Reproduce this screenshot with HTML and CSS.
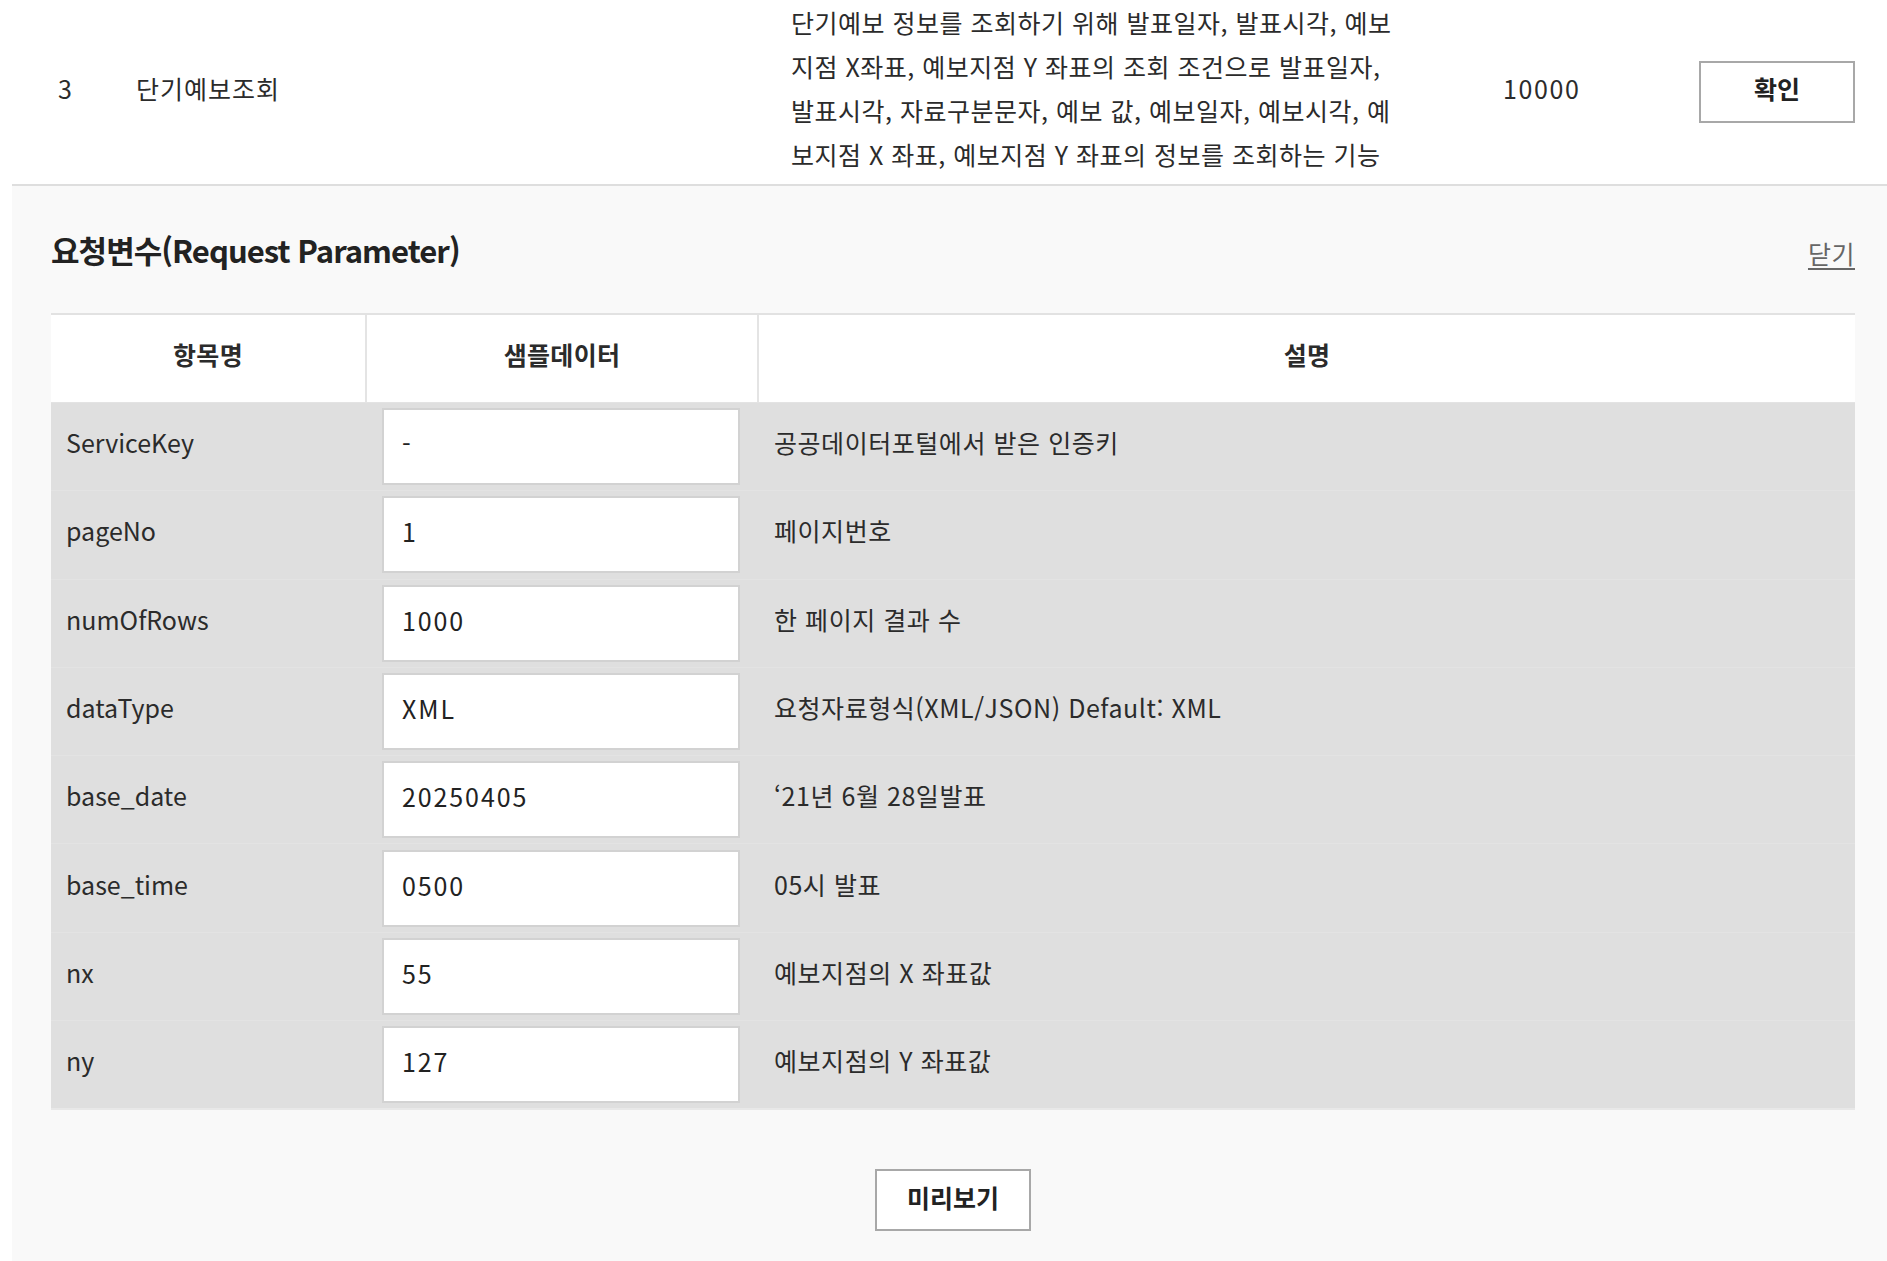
FILE: index.html
```html
<!DOCTYPE html>
<html lang="ko">
<head>
<meta charset="utf-8">
<title>단기예보조회</title>
<link rel="stylesheet" href="styles.css">
</head>
<body>
<div class="wrap">
  <div class="op-row">
    <div class="c-num">3</div>
    <div class="c-name">단기예보조회</div>
    <div class="c-desc">
      <p>단기예보 정보를 조회하기 위해 발표일자, 발표시각, 예보<br>지점 X좌표, 예보지점 Y 좌표의 조회 조건으로 발표일자,<br>발표시각, 자료구분문자, 예보 값, 예보일자, 예보시각, 예<br>보지점 X 좌표, 예보지점 Y 좌표의 정보를 조회하는 기능</p>
    </div>
    <div class="c-count">10000</div>
    <div class="c-btn"><button class="btn btn-ok" type="button">확인</button></div>
  </div>

  <section class="panel">
    <div class="panel-head">
      <h2 class="panel-title">요청변수(Request Parameter)</h2>
      <a class="close-link" href="#">닫기</a>
    </div>

    <div class="ptable">
      <div class="prow phead">
        <div class="pc pc-name">항목명</div>
        <div class="pc pc-sample">샘플데이터</div>
        <div class="pc pc-desc">설명</div>
      </div>
      <div class="prow">
        <div class="pc pc-name">ServiceKey</div>
        <div class="pc pc-sample"><input class="pin" type="text" value="-"></div>
        <div class="pc pc-desc">공공데이터포털에서 받은 인증키</div>
      </div>
      <div class="prow">
        <div class="pc pc-name">pageNo</div>
        <div class="pc pc-sample"><input class="pin" type="text" value="1"></div>
        <div class="pc pc-desc">페이지번호</div>
      </div>
      <div class="prow">
        <div class="pc pc-name">numOfRows</div>
        <div class="pc pc-sample"><input class="pin" type="text" value="1000"></div>
        <div class="pc pc-desc">한 페이지 결과 수</div>
      </div>
      <div class="prow">
        <div class="pc pc-name">dataType</div>
        <div class="pc pc-sample"><input class="pin" type="text" value="XML"></div>
        <div class="pc pc-desc">요청자료형식(XML/JSON) Default: XML</div>
      </div>
      <div class="prow">
        <div class="pc pc-name">base_date</div>
        <div class="pc pc-sample"><input class="pin" type="text" value="20250405"></div>
        <div class="pc pc-desc">‘21년 6월 28일발표</div>
      </div>
      <div class="prow">
        <div class="pc pc-name">base_time</div>
        <div class="pc pc-sample"><input class="pin" type="text" value="0500"></div>
        <div class="pc pc-desc">05시 발표</div>
      </div>
      <div class="prow">
        <div class="pc pc-name">nx</div>
        <div class="pc pc-sample"><input class="pin" type="text" value="55"></div>
        <div class="pc pc-desc">예보지점의 X 좌표값</div>
      </div>
      <div class="prow">
        <div class="pc pc-name">ny</div>
        <div class="pc pc-sample"><input class="pin" type="text" value="127"></div>
        <div class="pc pc-desc">예보지점의 Y 좌표값</div>
      </div>
    </div>

    <div class="panel-foot">
      <button class="btn btn-preview" type="button">미리보기</button>
    </div>
  </section>
</div>
</body>
</html>
```

FILE: styles.css
```css
* { box-sizing: border-box; }

html, body {
  margin: 0;
  padding: 0;
  background: #ffffff;
}

body {
  font-family: "Noto Sans CJK KR", "Noto Sans", sans-serif;
  color: #2b2b2b;
  font-size: 25px;
}

.wrap {
  margin-left: 12px;
}

/* top operation row */
.op-row {
  display: flex;
  align-items: center;
  height: 186px;
  border-bottom: 2px solid #dedede;
  background: #ffffff;
}

.c-num {
  width: 124px;
  padding-left: 46px;
  padding-bottom: 9px;
  font-size: 25px;
  letter-spacing: 1px;
}

.c-name {
  width: 655px;
  padding-bottom: 9px;
  font-size: 25px;
  letter-spacing: 1px;
}

.c-desc {
  width: 712px;
  margin-bottom: 8px;
}

.c-desc p {
  margin: 0;
  font-size: 25px;
  line-height: 44px;
  letter-spacing: 0.5px;
  white-space: nowrap;
}

.c-count {
  width: 196px;
  padding-bottom: 9px;
  font-size: 25px;
  letter-spacing: 1.6px;
}

.c-btn {
  display: flex;
}

.btn {
  width: 156px;
  height: 62px;
  border: 2px solid #a8a8a8;
  background: #ffffff;
  font-family: "Noto Sans CJK KR", "Noto Sans", sans-serif;
  font-size: 25px;
  font-weight: 700;
  color: #222222;
  padding: 0;
  cursor: pointer;
}

.btn-ok {
  padding-bottom: 9px;
}

.btn-preview {
  padding-bottom: 7px;
}

/* panel */
.panel {
  background: #f9f9f9;
  padding: 1px 32px 40px 39px;
}

.panel-head {
  display: flex;
  justify-content: space-between;
  align-items: center;
  height: 40px;
  margin-top: 43px;
  margin-bottom: 43px;
}

.panel-title {
  margin: 0;
  font-size: 31px;
  font-weight: 700;
  letter-spacing: -0.95px;
  color: #222222;
  line-height: 40px;
}

.close-link {
  font-size: 25px;
  letter-spacing: 0.5px;
  color: #666666;
  text-decoration: underline;
  text-underline-offset: 4px;
  margin-top: 6px;
}

/* parameter table */
.ptable {
  border-top: 2px solid #e2e2e2;
  border-bottom: 2px solid #e8e8e8;
  background: #dfdfdf;
}

.prow {
  display: flex;
  align-items: center;
  height: 88.3px;
  border-top: 1px solid #e3e3e3;
}

.prow.phead {
  height: 87px;
  border-top: 0;
  background: #ffffff;
  font-weight: 700;
  color: #2b2b2b;
}

.pc {
  height: 100%;
  display: flex;
  align-items: center;
  font-size: 25px;
  padding-bottom: 9px;
}

.pc-name {
  width: 314px;
  padding-left: 15px;
}

.pc-sample {
  width: 392px;
  padding: 0 17px;
}

.pc-desc {
  flex: 1;
  padding-left: 17px;
  letter-spacing: 0.55px;
}

.phead .pc {
  justify-content: center;
  padding: 0 0 9px 0;
  font-size: 25px;
  letter-spacing: 0.3px;
}

.phead .pc-sample,
.phead .pc-desc {
  border-left: 2px solid #e4e4e4;
}

.pin {
  width: 100%;
  height: 77px;
  border: 2px solid #d2d2d2;
  background: #ffffff;
  padding: 0 0 7px 18px;
  font-family: "Noto Sans CJK KR", "Noto Sans", sans-serif;
  font-size: 25px;
  letter-spacing: 1.9px;
  color: #222222;
  outline: none;
}

.panel-foot {
  display: flex;
  justify-content: center;
  padding-top: 59px;
}
```
